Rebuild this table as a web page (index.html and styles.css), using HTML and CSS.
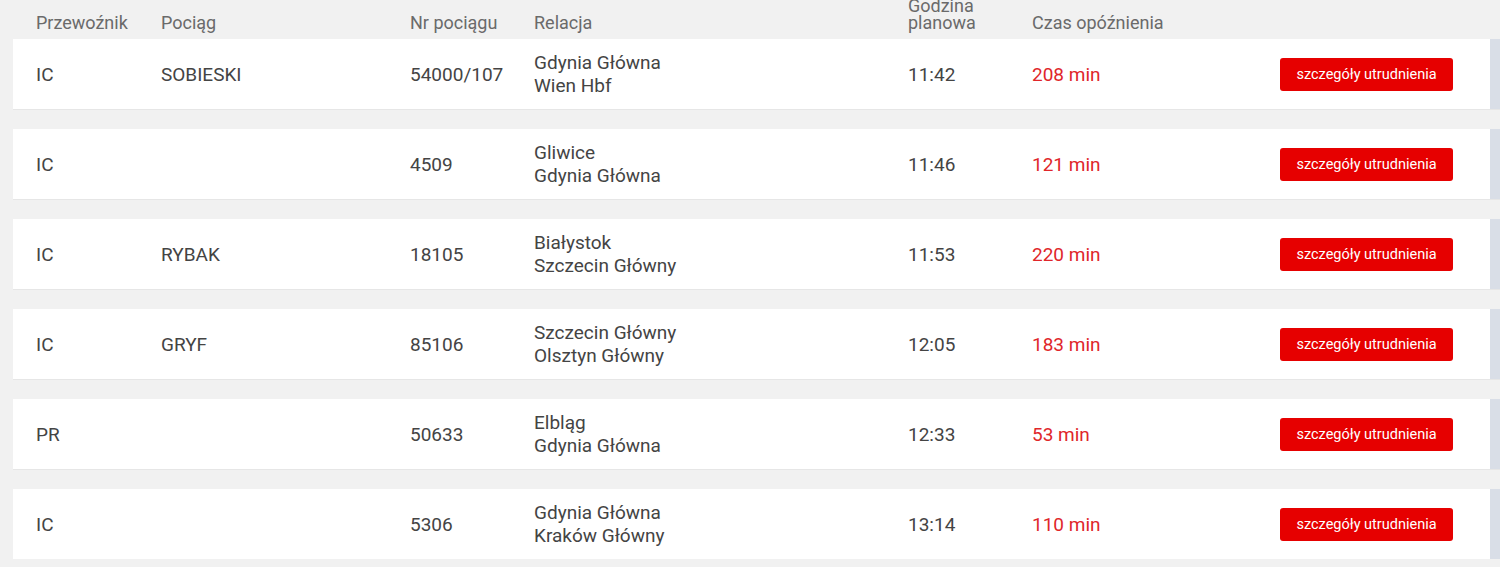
FILE: index.html
```html
<!DOCTYPE html>
<html lang="pl">
<head>
<meta charset="utf-8">
<title>Utrudnienia</title>
<link rel="stylesheet" href="styles.css">
</head>
<body>
<div class="table">
  <div class="head">
    <div>Przewoźnik</div>
    <div>Pociąg</div>
    <div>Nr pociągu</div>
    <div>Relacja</div>
    <div class="narrow">Godzina planowa</div>
    <div>Czas opóźnienia</div>
    <div></div>
  </div>

  <div class="row">
    <div>IC</div><div>SOBIESKI</div><div>54000/107</div>
    <div class="rel">Gdynia Główna<br>Wien Hbf</div>
    <div>11:42</div><div class="delay">208 min</div>
    <div><button class="btn">szczegóły utrudnienia</button></div>
  </div>
  <div class="row">
    <div>IC</div><div></div><div>4509</div>
    <div class="rel">Gliwice<br>Gdynia Główna</div>
    <div>11:46</div><div class="delay">121 min</div>
    <div><button class="btn">szczegóły utrudnienia</button></div>
  </div>
  <div class="row">
    <div>IC</div><div>RYBAK</div><div>18105</div>
    <div class="rel">Białystok<br>Szczecin Główny</div>
    <div>11:53</div><div class="delay">220 min</div>
    <div><button class="btn">szczegóły utrudnienia</button></div>
  </div>
  <div class="row">
    <div>IC</div><div>GRYF</div><div>85106</div>
    <div class="rel">Szczecin Główny<br>Olsztyn Główny</div>
    <div>12:05</div><div class="delay">183 min</div>
    <div><button class="btn">szczegóły utrudnienia</button></div>
  </div>
  <div class="row">
    <div>PR</div><div></div><div>50633</div>
    <div class="rel">Elbląg<br>Gdynia Główna</div>
    <div>12:33</div><div class="delay">53 min</div>
    <div><button class="btn">szczegóły utrudnienia</button></div>
  </div>
  <div class="row">
    <div>IC</div><div></div><div>5306</div>
    <div class="rel">Gdynia Główna<br>Kraków Główny</div>
    <div>13:14</div><div class="delay">110 min</div>
    <div><button class="btn">szczegóły utrudnienia</button></div>
  </div>
</div>
</body>
</html>
```
FILE: styles.css
```css
html, body {
  margin: 0;
  padding: 0;
  background: #f1f1f1;
  font-family: Roboto, "Liberation Sans", sans-serif;
  overflow: hidden;
}

.table {
  display: flex;
  flex-direction: column;
  gap: 20px;
  padding-left: 13px;
}

.head, .row {
  display: grid;
  grid-template-columns: 125px 249px 124px 374px 124px 1fr auto;
  padding-left: 23px;
  padding-right: 37px;
}

.head {
  align-items: end;
  height: 49px;
  box-sizing: border-box;
  margin-top: -10px;
  margin-bottom: -20px;
  padding-bottom: 8px;
  color: #6a6a6a;
  font-size: 18px;
  line-height: 17px;
}

.head .narrow {
  width: 80px;
}

.row {
  align-items: center;
  height: 70px;
  background: #fff;
  border-right: 10px solid #d9dee7;
  color: #444;
  font-size: 19px;
  line-height: 23px;
  box-shadow: 0 1px 0 #e6e6e6;
}

.delay {
  color: #e0262a;
}

.btn {
  display: block;
  width: 173px;
  height: 33px;
  border: 0;
  border-radius: 3px;
  background: #e60000;
  color: #fff;
  font-family: Roboto, "Liberation Sans", sans-serif;
  font-size: 14.5px;
  padding: 0;
  cursor: pointer;
}
```
